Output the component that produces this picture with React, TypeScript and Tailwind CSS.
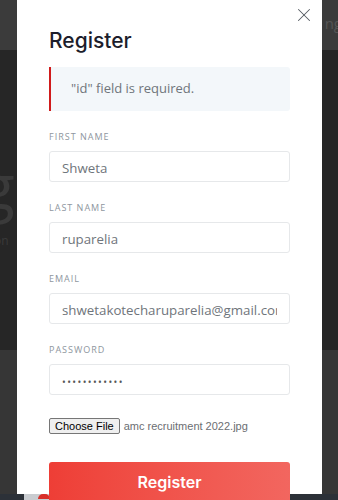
import { X } from 'lucide-react';

const FIELDS = [
  { label: 'First Name', value: 'Shweta' },
  { label: 'Last Name', value: 'ruparelia' },
  { label: 'Email', value: 'shwetakotecharuparelia@gmail.com' },
];

function Field({ label, value, secret }: { label: string; value: string; secret?: boolean }) {
  return (
    <div className="flex flex-col mb-[20px]">
      <span className="h-[12px] leading-[12px] text-[9px] uppercase tracking-[1px] text-[#8e969e]">{label}</span>
      <div className="mt-[8px] h-[31px] border border-[#e6e8ea] rounded-[3px] flex items-center px-[12px]">
        <div className="flex-1 overflow-hidden">
          <span
            className={`whitespace-nowrap ${
              secret ? 'text-[10px] text-[#555] tracking-[1.4px]' : 'text-[13.3px] text-[#6f757b]'
            }`}
          >
            {value}
          </span>
        </div>
      </div>
    </div>
  );
}

export default function App() {
  return (
    <div
      className="relative w-[338px] h-[500px] overflow-hidden bg-[#262626]"
      style={{ fontFamily: '"Open Sans", "Noto Sans", sans-serif' }}
    >
      {/* page behind the modal */}
      <div className="flex flex-col h-full">
        <div className="h-[50px] bg-[#3b3b3b] flex justify-end items-start pt-[12px] overflow-hidden">
          <span className="text-[15px] text-[#555] -mr-[4px]">ng</span>
        </div>
        <div className="h-[300px] bg-[#262626] flex flex-col pt-[104px] overflow-hidden">
          <span className="text-[64px] leading-[64px] text-[#3a3a3a] -ml-[20px]">g</span>
          <span className="text-[12px] leading-[14px] text-[#3a3a3a] -ml-[6px] mt-[16px]">on</span>
        </div>
        <div className="flex-1 bg-[#363636]" />
        <div className="h-[6px] bg-[#2c3138] flex items-end gap-[6px] px-[24px]">
          <span className="w-[40px] h-[6px] bg-[#c9ccd0] flex justify-center">
            <span className="w-[12px] h-[5px] rounded-t-full bg-[#d9302a]" />
          </span>
          <span className="w-[60px] h-[6px] bg-[#3e4651]" />
          <span className="w-[16px] h-[5px] bg-[#9cc2e8]" />
          <span className="w-[40px] h-[6px] bg-[#3e4651]" />
          <span className="w-[22px] h-[6px] bg-[#c76a2a]" />
          <span className="w-[44px] h-[6px] bg-[#8c9096]" />
        </div>
      </div>

      {/* modal */}
      <div className="absolute left-[17px] top-0 w-[305px] h-[494px] bg-white px-[32px] pt-[27px]">
        <button className="absolute right-[7px] top-[4px] text-[#555b62]">
          <X className="w-[22px] h-[22px]" strokeWidth={1.1} />
        </button>

        <h2
          className="h-[28px] leading-[28px] text-[21px] font-medium text-[#1c1d2b]"
          style={{ fontFamily: 'Inter, "Noto Sans", sans-serif' }}
        >
          Register
        </h2>

        <div className="mt-[12px] h-[44px] bg-[#f3f7fa] border-l-2 border-[#d01b1b] rounded-r-[3px] flex items-center pl-[20px]">
          <span className="text-[13px] text-[#6f757b]">"id" field is required.</span>
        </div>

        <div className="mt-[20px] flex flex-col">
          {FIELDS.map((f) => (
            <Field key={f.label} label={f.label} value={f.value} />
          ))}
          <Field label="Password" value="••••••••••••" secret />
        </div>

        <div
          className="mt-[3px] flex items-center gap-[4px]"
          style={{ fontFamily: '"Liberation Sans", Arial, sans-serif' }}
        >
          <span className="h-[16px] px-[5px] flex items-center border border-[#767676] rounded-[2px] bg-[#efefef] text-[11px] text-black">
            Choose File
          </span>
          <span className="text-[11px] text-[#6b6e72]">amc recruitment 2022.jpg</span>
        </div>

        <button
          className="mt-[27px] w-full h-[42px] rounded-[3px] bg-gradient-to-r from-[#ee3e36] to-[#f2665f] text-white text-[16px] font-semibold flex items-center justify-center pb-[2px]"
          style={{ fontFamily: 'Inter, "Noto Sans", sans-serif' }}
        >
          Register
        </button>
      </div>
    </div>
  );
}
